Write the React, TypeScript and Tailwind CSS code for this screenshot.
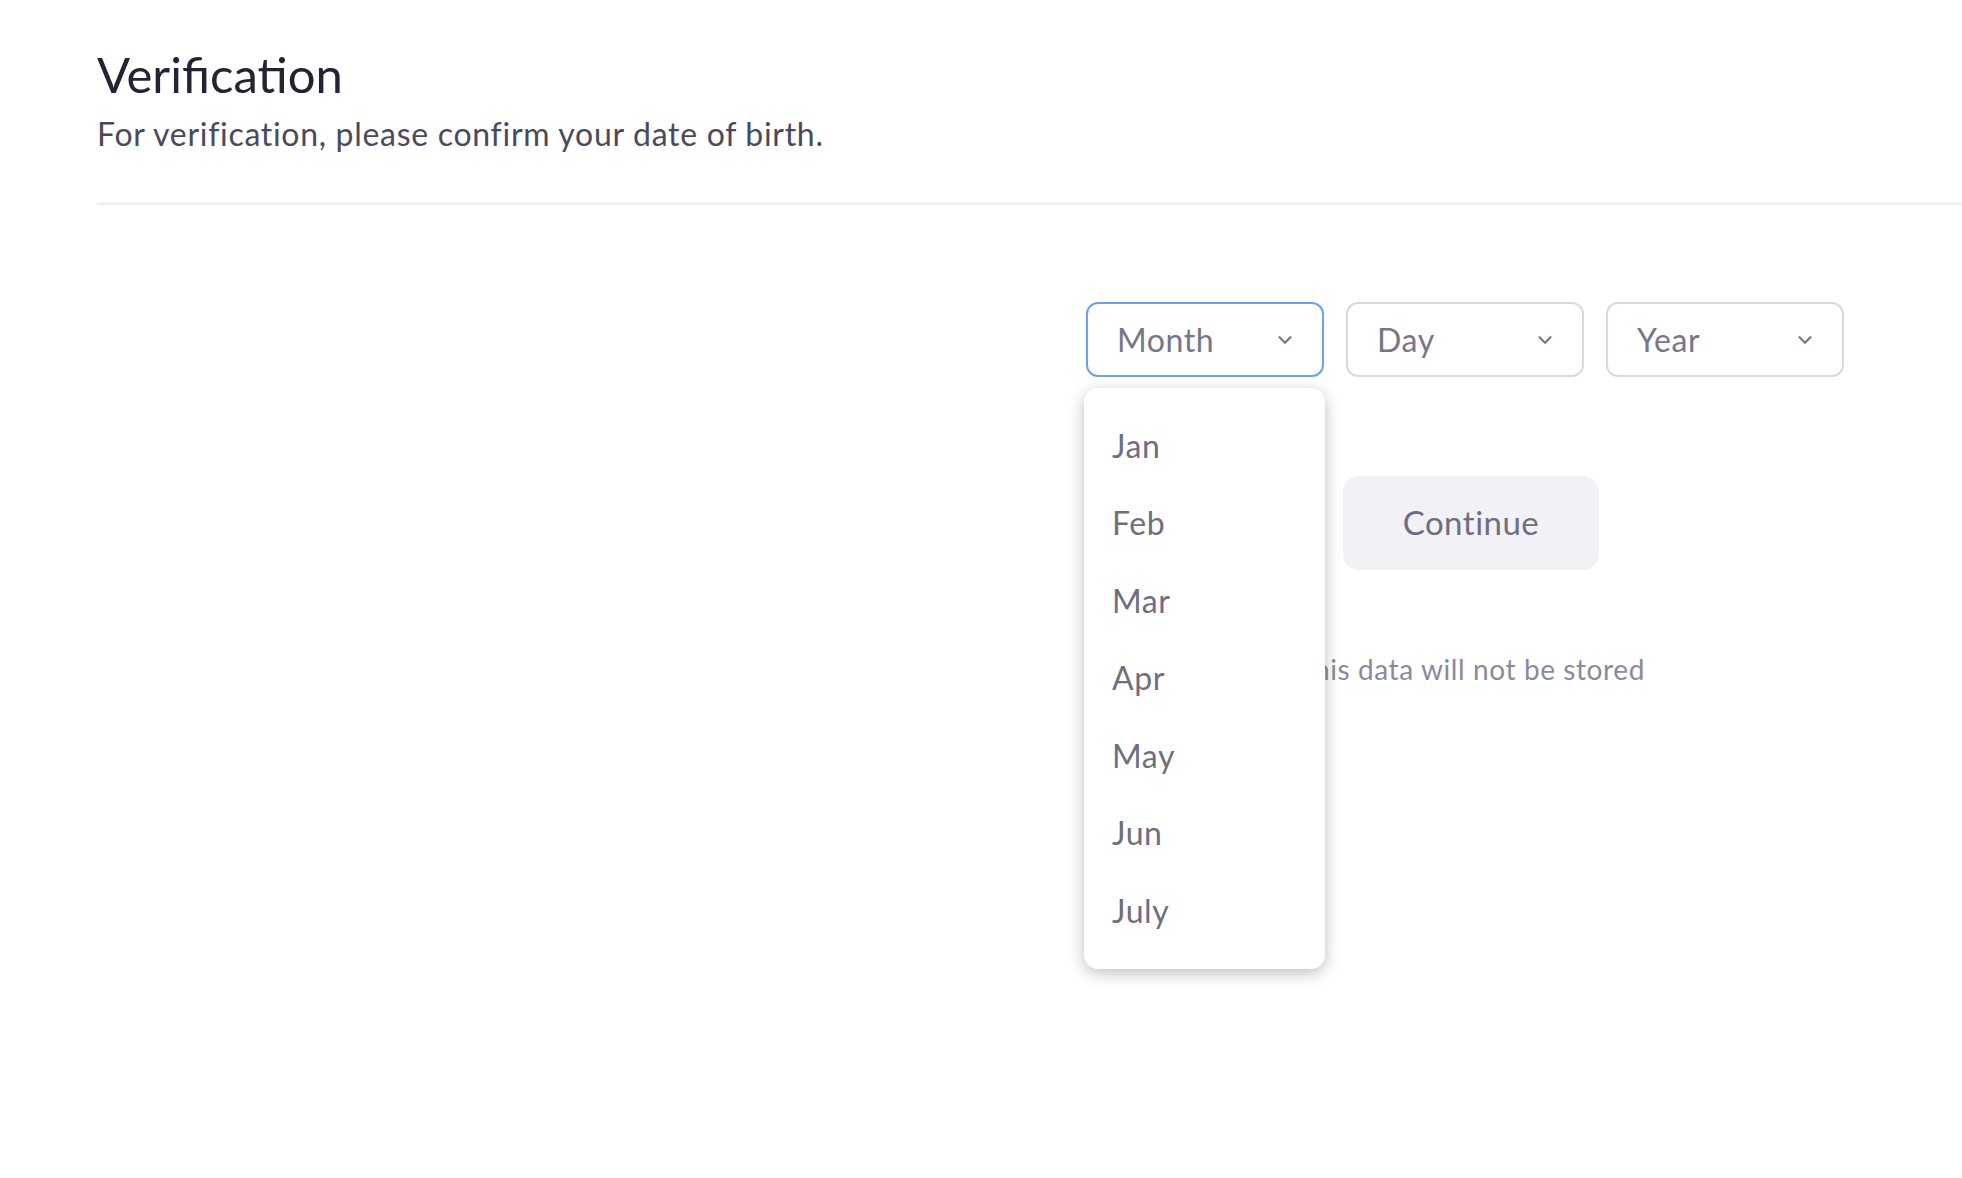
import { ChevronDown } from "lucide-react";

const months = ["Jan", "Feb", "Mar", "Apr", "May", "Jun", "July"];

function SelectBox({ label, active }: { label: string; active?: boolean }) {
  return (
    <div
      className={`flex h-[75px] w-[238px] items-center justify-between rounded-[12px] border-[2.5px] bg-white pl-[29px] pr-[26px] ${
        active ? "border-[#6aa2ef]" : "border-[#d8d8e0]"
      }`}
    >
      <span className="text-[32px] tracking-[0.6px] text-[#767688]">{label}</span>
      <ChevronDown className="h-[22px] w-[22px] text-[#77778a]" strokeWidth={2.4} />
    </div>
  );
}

export default function App() {
  return (
    <div className="min-h-[1178px] w-full bg-white font-['Lato','Noto_Sans',sans-serif]">
      {/* header */}
      <div className="pl-[97px] pt-[42px]">
        <h1 className="text-[49px] leading-[64px] text-[#232333]">Verification</h1>
        <p className="mt-[8px] text-[32px] leading-[40px] tracking-[0.7px] text-[#4a4a5c]">
          For verification, please confirm your date of birth.
        </p>
        <div className="mt-[48px] h-[3px] bg-[#f1f1f5]" />
      </div>

      {/* form */}
      <div className="flex justify-end pr-[118px] pt-[97px]">
        <div className="flex flex-col items-center">
          <div className="flex gap-[22px]">
            <div className="relative">
              <SelectBox label="Month" active />
              <div className="absolute left-[-2px] top-[86px] z-10 w-[241px] rounded-[14px] bg-white py-[19px] shadow-[0_4px_16px_rgba(0,0,0,0.26)]">
                {months.map((m) => (
                  <div
                    key={m}
                    className="flex h-[77.5px] items-center pl-[28px] text-[32px] tracking-[0.6px] text-[#6e6e80]"
                  >
                    {m}
                  </div>
                ))}
              </div>
            </div>
            <SelectBox label="Day" />
            <SelectBox label="Year" />
          </div>

          <div className="ml-[12px] flex flex-col items-center">
            <button className="mt-[99px] flex h-[94px] w-[256px] items-center justify-center rounded-[16px] bg-[#f1f1f6] text-[33px] tracking-[0.5px] text-[#6e6e80]">
              Continue
            </button>

            <p className="mt-[78px] text-[28px] tracking-[0.6px] text-[#8a8a9c]">
              This data will not be stored
            </p>
          </div>
        </div>
      </div>
    </div>
  );
}
